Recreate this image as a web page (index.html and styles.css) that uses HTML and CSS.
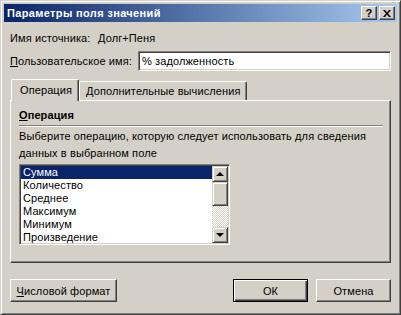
FILE: index.html
```html
<!DOCTYPE html>
<html lang="ru">
<head>
    <meta charset="UTF-8">
    <title>Параметры поля значений</title>
    <link rel="stylesheet" href="styles.css">
</head>
<body>
    <div class="window">
        <div class="titlebar">
            <span class="title">Параметры поля значений</span>
            <div class="caption-btns">
                <div class="cap-btn">?</div>
                <div class="cap-btn">
                    <svg width="8" height="7" viewBox="0 0 8 7"><path d="M0 0h2l2 2.5 2-2.5h2l-3 3.5 3 3.5h-2l-2-2.5-2 2.5h-2l3-3.5z" fill="#000"/></svg>
                </div>
            </div>
        </div>

        <div class="content">
            <div class="row source-row">
                <span class="label-src">Имя источника:</span>
                <span>Долг+Пеня</span>
            </div>
            <div class="row name-row">
                <span class="label-name"><u>П</u>ользовательское имя:</span>
                <div class="textbox">% задолженность</div>
            </div>

            <div class="tabs">
                <div class="tab-strip">
                    <div class="tab active">Операция</div>
                    <div class="tab">Дополнительные вычисления</div>
                </div>
                <div class="tab-panel">
                    <div class="group-title"><u>О</u>перация</div>
                    <div class="separator"></div>
                    <p class="desc">Выберите операцию, которую следует использовать для сведения</p>
                    <p class="desc">данных в выбранном поле</p>
                    <div class="listbox">
                        <ul class="items">
                            <li class="selected">Сумма</li>
                            <li>Количество</li>
                            <li>Среднее</li>
                            <li>Максимум</li>
                            <li>Минимум</li>
                            <li>Произведение</li>
                        </ul>
                        <div class="scrollbar">
                            <div class="sb-btn"><span class="arrow-up"></span></div>
                            <div class="sb-thumb"></div>
                            <div class="sb-track"></div>
                            <div class="sb-btn"><span class="arrow-down"></span></div>
                        </div>
                    </div>
                </div>
            </div>

            <div class="buttons">
                <div class="btn"><u>Ч</u>исловой формат</div>
                <div class="spacer"></div>
                <div class="btn default">ОК</div>
                <div class="btn">Отмена</div>
            </div>
        </div>
    </div>
</body>
</html>
```

FILE: styles.css
```css
body {
    margin: 0;
    background: #d4d0c8;
    font-family: "Liberation Sans", Arial, sans-serif;
    font-size: 11px;
    letter-spacing: 0.1px;
    color: #000;
}

u {
    text-decoration: underline;
}

.window {
    width: 401px;
    height: 315px;
    box-sizing: border-box;
    border-top: 1px solid #d4d0c8;
    border-left: 1px solid #d4d0c8;
    border-right: 1px solid #404040;
    border-bottom: 1px solid #404040;
    box-shadow: inset 1px 1px #fff, inset -1px -1px #808080;
    padding: 3px;
    display: flex;
    flex-direction: column;
}

.titlebar {
    height: 18px;
    background: linear-gradient(to right, #0a246a, #a6caf0);
    display: flex;
    align-items: center;
    justify-content: space-between;
    padding: 0 2px 0 3px;
}

.title {
    color: #fff;
    font-weight: bold;
    font-size: 11px;
    letter-spacing: 0.35px;
}

.caption-btns {
    display: flex;
    gap: 2px;
}

.cap-btn {
    width: 16px;
    height: 14px;
    box-sizing: border-box;
    background: #d4d0c8;
    border-top: 1px solid #fff;
    border-left: 1px solid #fff;
    border-right: 1px solid #404040;
    border-bottom: 1px solid #404040;
    box-shadow: inset -1px -1px #808080;
    display: flex;
    align-items: center;
    justify-content: center;
    font-weight: bold;
    font-size: 11px;
    line-height: 12px;
}

.content {
    flex: 1;
    padding: 0 6px 0 6px;
    display: flex;
    flex-direction: column;
}

.row {
    display: flex;
    align-items: center;
}

.source-row {
    margin-top: 9px;
    height: 13px;
}

.label-src {
    width: 88px;
}

.name-row {
    margin-top: 7px;
    height: 20px;
}

.label-name {
    width: 128px;
}

.textbox {
    flex: 1;
    height: 20px;
    box-sizing: border-box;
    background: #fff;
    border-top: 1px solid #808080;
    border-left: 1px solid #808080;
    border-right: 1px solid #fff;
    border-bottom: 1px solid #fff;
    box-shadow: inset 1px 1px #404040, inset -1px -1px #d4d0c8;
    padding: 0 3px;
    line-height: 18px;
}

.tabs {
    margin-top: 8px;
}

.tab-strip {
    display: flex;
    align-items: flex-end;
    height: 21px;
    padding-left: 1px;
    position: relative;
    z-index: 1;
}

.tab {
    height: 19px;
    box-sizing: border-box;
    border-top: 1px solid #fff;
    border-left: 1px solid #fff;
    border-right: 1px solid #404040;
    box-shadow: inset -1px 0 #808080;
    border-radius: 2px 2px 0 0;
    padding: 0 6px;
    line-height: 18px;
}

.tab.active {
    height: 22px;
    margin-bottom: -1px;
    background: #d4d0c8;
    padding: 0 8px;
    line-height: 20px;
    width: 68px;
}

.tab-panel {
    height: 163px;
    box-sizing: border-box;
    border-top: 1px solid #fff;
    border-left: 1px solid #fff;
    border-right: 1px solid #404040;
    border-bottom: 1px solid #404040;
    box-shadow: inset -1px -1px #808080;
    padding: 7px 7px 0 8px;
}

.group-title {
    font-weight: bold;
    line-height: 14px;
}

.separator {
    height: 1px;
    background: #808080;
    border-bottom: 1px solid #fff;
    margin-top: 3px;
}

.desc {
    margin: 0;
    line-height: 17px;
}

.desc:first-of-type {
    margin-top: 1px;
}

.listbox {
    margin-top: 2px;
    width: 211px;
    height: 81px;
    box-sizing: border-box;
    background: #fff;
    border-top: 1px solid #808080;
    border-left: 1px solid #808080;
    border-right: 1px solid #fff;
    border-bottom: 1px solid #fff;
    box-shadow: inset 1px 1px #404040, inset -1px -1px #d4d0c8;
    padding: 1px;
    display: flex;
    overflow: hidden;
}

.items {
    list-style: none;
    margin: 0;
    padding: 0;
    flex: 1;
}

.items li {
    height: 13px;
    line-height: 13px;
    padding-left: 2px;
}

.items li.selected {
    background: #0a246a;
    color: #fff;
}

.scrollbar {
    width: 16px;
    display: flex;
    flex-direction: column;
}

.sb-btn,
.sb-thumb {
    box-sizing: border-box;
    background: #d4d0c8;
    border-top: 1px solid #d4d0c8;
    border-left: 1px solid #d4d0c8;
    border-right: 1px solid #404040;
    border-bottom: 1px solid #404040;
    box-shadow: inset 1px 1px #fff, inset -1px -1px #808080;
}

.sb-btn {
    height: 16px;
    display: flex;
    align-items: center;
    justify-content: center;
}

.sb-thumb {
    height: 24px;
}

.sb-track {
    flex: 1;
    background-color: #fff;
    background-image: repeating-conic-gradient(#d4d0c8 0 25%, #fff 0 50%);
    background-size: 2px 2px;
}

.arrow-up {
    width: 0;
    height: 0;
    border-left: 4px solid transparent;
    border-right: 4px solid transparent;
    border-bottom: 4px solid #000;
}

.arrow-down {
    width: 0;
    height: 0;
    border-left: 4px solid transparent;
    border-right: 4px solid transparent;
    border-top: 4px solid #000;
}

.buttons {
    margin-top: 16px;
    display: flex;
    gap: 8px;
}

.spacer {
    flex: 1;
}

.btn {
    width: 75px;
    height: 23px;
    box-sizing: border-box;
    border-top: 1px solid #fff;
    border-left: 1px solid #fff;
    border-right: 1px solid #404040;
    border-bottom: 1px solid #404040;
    box-shadow: inset -1px -1px #808080;
    display: flex;
    align-items: center;
    justify-content: center;
}

.btn:first-child {
    width: 107px;
}

.btn.default {
    border: 1px solid #000;
    box-shadow: inset 1px 1px #fff, inset -1px -1px #404040, inset -2px -2px #808080;
}
```
